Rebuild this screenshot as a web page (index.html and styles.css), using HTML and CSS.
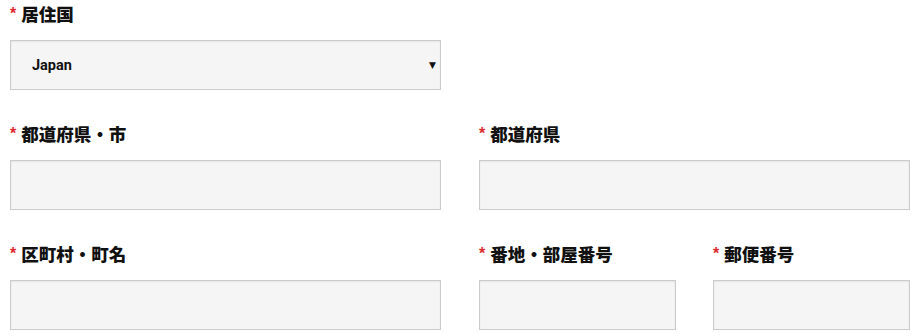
FILE: index.html
```html
<!DOCTYPE html>
<html lang="ja">
<head>
<meta charset="utf-8">
<title>住所</title>
<link rel="stylesheet" href="styles.css">
</head>
<body>
<form class="address-form">
  <div class="field">
    <label class="label"><span class="req">*</span>居住国</label>
    <div class="select">
      <span class="select-value">Japan</span>
      <span class="select-arrow">▼</span>
    </div>
  </div>
  <div class="spacer"></div>

  <div class="field">
    <label class="label"><span class="req">*</span>都道府県・市</label>
    <div class="input"></div>
  </div>
  <div class="field">
    <label class="label"><span class="req">*</span>都道府県</label>
    <div class="input"></div>
  </div>

  <div class="field">
    <label class="label"><span class="req">*</span>区町村・町名</label>
    <div class="input"></div>
  </div>
  <div class="subgrid">
    <div class="field">
      <label class="label"><span class="req">*</span>番地・部屋番号</label>
      <div class="input"></div>
    </div>
    <div class="field">
      <label class="label"><span class="req">*</span>郵便番号</label>
      <div class="input"></div>
    </div>
  </div>
</form>
</body>
</html>
```

FILE: styles.css
```css
html, body {
  margin: 0;
  padding: 0;
  background: #fff;
}
body {
  font-family: Roboto, "Liberation Sans", "Noto Sans CJK JP", sans-serif;
  color: #111;
}
.address-form {
  display: grid;
  grid-template-columns: 431px 431px;
  column-gap: 38px;
  row-gap: 30px;
  padding-left: 10px;
}
.subgrid {
  display: grid;
  grid-template-columns: 197px 197px;
  column-gap: 37px;
}
.field {
  display: flex;
  flex-direction: column;
}
.label {
  display: flex;
  align-items: center;
  height: 26px;
  margin-bottom: 14px;
  font-family: "Noto Sans CJK JP", sans-serif;
  font-weight: 900;
  font-size: 17.5px;
  color: #111;
}
.req {
  color: #dc2a30;
  font-family: "Liberation Sans", sans-serif;
  font-weight: 700;
  font-size: 16px;
  margin-right: 5px;
  position: relative;
  top: 1px;
}
.input, .select {
  box-sizing: border-box;
  height: 50px;
  background: #f5f5f5;
  border: 1px solid #cbcbcb;
  box-shadow: inset 0 1px 2px rgba(0, 0, 0, 0.07);
}
.select {
  display: flex;
  align-items: center;
  justify-content: space-between;
  padding: 0 4px 0 21px;
}
.select-value {
  font-family: Roboto, "Liberation Sans", sans-serif;
  font-weight: 700;
  font-size: 14.5px;
  color: #111;
}
.select-arrow {
  font-family: "DejaVu Sans", sans-serif;
  font-size: 9px;
  color: #111;
}
```
